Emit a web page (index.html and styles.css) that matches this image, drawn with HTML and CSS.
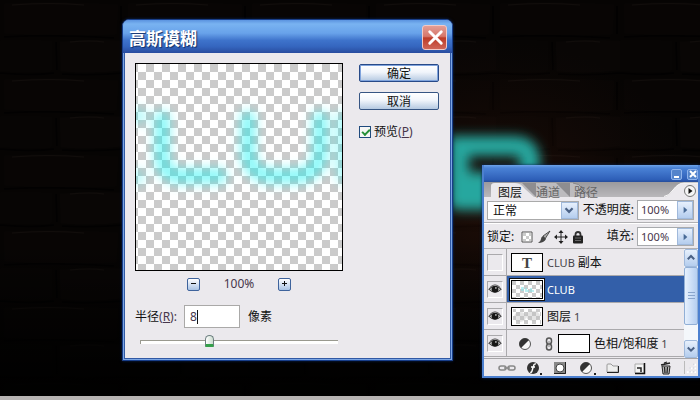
FILE: index.html
```html
<!DOCTYPE html>
<html lang="zh-CN">
<head>
<meta charset="utf-8">
<title>高斯模糊</title>
<link rel="stylesheet" href="styles.css">
</head>
<body>
<main class="desktop">
  <svg class="wall" preserveAspectRatio="xMidYMid slice" viewBox="0 0 700 400" aria-hidden="true">
    <defs>
      <pattern id="bricks" width="124" height="76" patternUnits="userSpaceOnUse">
        <rect width="124" height="76" fill="#060403"/>
        <path d="M4 4Q60 1 118 5L116 34Q60 37 5 33Z" fill="#080504"/>
        <path d="M0 41Q30 39 52 42L51 71Q20 73 0 70Z" fill="#070504"/>
        <path d="M60 42Q90 39 124 41V70Q90 74 61 71Z" fill="#090605"/>
        <path d="M4 37Q50 34 114 38M0 73Q30 76 54 73M62 74Q90 76 124 73M56 42L57 70M121 6V34" fill="none" stroke="#020101" stroke-width="2"/>
        <path d="M12 5Q50 2 84 5M70 42Q90 40 104 42" stroke="#110d0b" fill="none"/>
      </pattern>
      <linearGradient id="shade" x2="0" y2="1">
        <stop offset=".6" stop-opacity="0"/><stop offset=".95" stop-opacity=".9"/>
      </linearGradient>
      <radialGradient id="warm"><stop stop-color="#5a2410" stop-opacity=".3"/><stop offset="1" stop-color="#30140a" stop-opacity="0"/></radialGradient>
      <filter id="neon" x="-40%" y="-40%" width="180%" height="180%"><feGaussianBlur stdDeviation="6"/></filter>
    </defs>
    <rect width="700" height="400" fill="url(#bricks)"/>
    <ellipse cx="500" cy="200" rx="190" ry="160" fill="url(#warm)"/>
    <rect width="700" height="400" fill="url(#shade)"/>
    <g filter="url(#neon)" fill="none" stroke="#27a79f" stroke-width="20">
      <path d="M459 208V146H514Q530 146 530 161Q530 182 514 182H459"/>
      <path d="M455 198H500" stroke-width="24"/>
    </g>
  </svg>

  <section class="dialog" aria-labelledby="dialog-title">
    <header class="dialog-title">
      <h1 id="dialog-title">高斯模糊</h1>
      <button class="close" aria-label="关闭"><svg viewBox="0 0 26 26"><path d="M7 7L19 19M19 7L7 19" stroke="#fff" stroke-width="3" stroke-linecap="round"/></svg></button>
    </header>
    <form class="dialog-body">
      <div class="settings">
        <div class="preview">
          <svg viewBox="0 0 206 206" aria-hidden="true">
            <defs><filter id="soft" x="-20%" y="-40%" width="140%" height="180%"><feGaussianBlur stdDeviation="6"/></filter></defs>
            <g filter="url(#soft)" fill="none" stroke="#00f0f0" stroke-opacity=".48" stroke-width="15" stroke-linecap="round">
              <path d="M-4 52H4M-4 113H2" stroke-opacity=".3"/>
              <path d="M26 54V92Q26 112 44 112H84"/>
              <path d="M112 54V88Q112 112 138 112H158Q184 112 184 88V54"/>
              <path d="M208 54V112" stroke-opacity=".35"/>
            </g>
          </svg>
        </div>
        <div class="zoom">
          <button type="button" aria-label="缩小"><svg viewBox="0 0 13 13"><path d="M3 5.500H8" stroke="#111"/></svg></button>
          <output>100%</output>
          <button type="button" aria-label="放大"><svg viewBox="0 0 13 13"><path d="M3 5.500H8M5.500 3V8" stroke="#111"/></svg></button>
        </div>
        <div class="radius">
          <label for="radius">半径<span class="latin">(<u>R</u>):</span></label>
          <input id="radius" type="text" value="8">
          <span>像素</span>
        </div>
        <input class="slider" type="range" min="0" max="100" value="34" aria-label="半径">
      </div>
      <div class="actions">
        <button class="push primary" type="button">确定</button>
        <button class="push" type="button">取消</button>
        <label class="check"><input type="checkbox" checked><span>预览<span class="latin">(<u>P</u>)</span></span></label>
      </div>
    </form>
  </section>

  <section class="panel" aria-label="图层面板">
    <header class="panel-title">
      <button aria-label="最小化"><svg viewBox="0 0 11 11"><path d="M2 8H7" stroke="#fff" stroke-width="2"/></svg></button>
      <button aria-label="关闭面板"><svg viewBox="0 0 11 11"><path d="M2 2L8 8M8 2L2 8" stroke="#fff" stroke-width="2"/></svg></button>
    </header>
    <nav class="tabs">
      <svg class="tab-shapes" viewBox="0 0 110 15" aria-hidden="true">
        <path d="M0 15V4Q0 1 4 1H82Q88 1 92 7L99 15Z" fill="#bcbbbe"/>
        <path d="M82 1Q88 1 92 7L99 15" fill="none" stroke="#858487"/>
        <path d="M65 1L79 15V1Z" fill="#8e8d90"/>
        <path d="M31 1L45 15V1Z" fill="#8e8d90"/>
        <path d="M0 15V4Q0 1 4 1H24Q30 1 34 7L43 15Z" fill="#ebe9ed"/>
      </svg>
      <button class="tab active">图层</button>
      <button class="tab">通道</button>
      <button class="tab">路径</button>
      <button class="menu" aria-label="面板菜单"><svg viewBox="0 0 34 15"><path d="M0 15Q5 14 9 8Q14 1 20 1H34V15Z" fill="#ebe9ed"/><path d="M0 14.500Q5 14 9 8Q14 1 20 1H34" fill="none" stroke="#f8f8f8"/><circle cx="26" cy="9" r="5.500" fill="#f5f5f5" stroke="#777"/><path d="M24.500 6L28.500 9L24.500 12Z" fill="#111"/></svg></button>
    </nav>
    <div class="controls">
      <div class="select">
        <select aria-label="混合模式"><option>正常</option></select>
        <svg viewBox="0 0 17 17" aria-hidden="true"><path d="M4 6L8 10L12 6" fill="none" stroke="#4a6185" stroke-width="2.500"/></svg>
      </div>
      <div class="amount">
        <label for="opacity">不透明度:</label>
        <span class="spin"><input id="opacity" type="text" value="100%"><button aria-label="调整不透明度"><svg viewBox="0 0 15 17"><path d="M6 5L10 8.500L6 12Z" fill="#486a96"/></svg></button></span>
      </div>
    </div>
    <div class="controls lock">
      <span class="lock-label">锁定:</span>
      <button class="tool" aria-label="锁定透明像素"><svg viewBox="0 0 14 14"><path d="M2 2H12V12H2Z" fill="#fff" stroke="#555"/><path d="M3 3H6V6H3ZM6 6H9V9H6ZM9 3H11V6H9ZM3 9H6V11H3ZM9 9H11V11H9Z" fill="#ccc"/></svg></button>
      <button class="tool" aria-label="锁定图像像素"><svg viewBox="0 0 14 14"><path d="M13 1L6 6L8 9Z" fill="#aaa" stroke="#333" stroke-width=".8"/><path d="M6 6L9 9Q7 13 1 13Q4 11 4 9Q4 7 6 6Z" fill="#444"/></svg></button>
      <button class="tool" aria-label="锁定位置"><svg viewBox="0 0 14 14"><path d="M7 2V12M2 7H12" stroke="#222"/><path d="M7 0L9.500 3H4.500ZM7 14L9.500 11H4.500ZM0 7L3 4.500V9.500ZM14 7L11 4.500V9.500Z" fill="#222"/></svg></button>
      <button class="tool" aria-label="锁定全部"><svg viewBox="0 0 14 14"><path d="M4.500 7V4.500Q4.500 2 7 2Q9.500 2 9.500 4.500V7" fill="none" stroke="#333" stroke-width="1.800"/><rect x="2" y="5.500" width="10" height="8" rx="1" fill="#222"/><path d="M4 8H10M4 10.500H10" stroke="#666"/></svg></button>
      <div class="amount">
        <label for="fill">填充:</label>
        <span class="spin"><input id="fill" type="text" value="100%"><button aria-label="调整填充"><svg viewBox="0 0 15 17"><path d="M6 5L10 8.500L6 12Z" fill="#486a96"/></svg></button></span>
      </div>
    </div>
    <div class="layers">
      <ul>
        <li><button class="eye" aria-label="显示图层"></button><span class="thumb type-thumb">T</span><span class="name">CLUB <b>副本</b></span></li>
        <li class="selected"><button class="eye" aria-label="隐藏图层"><svg viewBox="0 0 16 12"><use href="#eye"/></svg></button><span class="thumb checker"><svg viewBox="0 0 30 17"><path d="M9 7H12M9 9H12M14 7V10H17M19 7V10H22" stroke="#8de4e8" stroke-opacity=".6" fill="none" stroke-width="2"/></svg></span><span class="name">CLUB</span></li>
        <li><button class="eye" aria-label="隐藏图层"><svg viewBox="0 0 16 12"><use href="#eye"/></svg></button><span class="thumb checker"><svg viewBox="0 0 30 17"><ellipse cx="8" cy="9" rx="6" ry="5" fill="#bbb" opacity=".4"/><ellipse cx="21" cy="8" rx="7" ry="5" fill="#bbb" opacity=".4"/></svg></span><span class="name"><b>图层</b> 1</span></li>
        <li><button class="eye" aria-label="隐藏图层"><svg viewBox="0 0 16 12"><use href="#eye"/></svg></button><svg class="adjust" viewBox="0 0 14 14"><use href="#half"/></svg><svg class="chain" viewBox="0 0 8 14"><rect x="1.500" y="1" width="5" height="6" rx="2.500" fill="none" stroke="#555" stroke-width="1.500"/><rect x="1.500" y="7" width="5" height="6" rx="2.500" fill="none" stroke="#555" stroke-width="1.500"/><path d="M4 4V10" stroke="#888"/></svg><span class="thumb"></span><span class="name"><b>色相/饱和度</b> 1</span></li>
      </ul>
      <div class="scroll">
        <button aria-label="向上滚动"><svg viewBox="0 0 13 17"><path d="M3 10L6.500 6.500L10 10" fill="none" stroke="#4a6185" stroke-width="2.200"/></svg></button>
        <div class="grip"><svg viewBox="0 0 7 9"><path d="M0 .5H7M0 3.500H7M0 6.500H7" stroke="#8aa5cc"/></svg></div>
        <button class="down" aria-label="向下滚动"><svg viewBox="0 0 13 17"><path d="M3 7L6.500 10.500L10 7" fill="none" stroke="#4a6185" stroke-width="2.200"/></svg></button>
      </div>
    </div>
    <footer class="toolbar">
      <button aria-label="链接图层"><svg viewBox="0 0 18 14"><rect x="1" y="5" width="7" height="4" rx="2" fill="none" stroke="#888" stroke-width="1.500"/><rect x="10" y="5" width="7" height="4" rx="2" fill="none" stroke="#888" stroke-width="1.500"/><path d="M6 7H12" stroke="#888" stroke-width="1.500"/></svg></button>
      <button aria-label="图层样式"><svg viewBox="0 0 18 14"><circle cx="8" cy="7" r="6" fill="#333"/><path d="M11 3Q9 2.500 8.500 5L7 10Q6.500 12 5 11M6 6H10" fill="none" stroke="#fff" stroke-width="1.400"/><path d="M15 12H17V14H15Z" fill="#222"/></svg></button>
      <button aria-label="添加蒙版"><svg viewBox="0 0 18 14"><path d="M3 1H15V13H3Z" fill="#888"/><path d="M3 12.500H14.500V1" fill="none" stroke="#222"/><circle cx="9" cy="7" r="4" fill="#fff" stroke="#444"/></svg></button>
      <button aria-label="新建调整图层"><svg viewBox="0 0 18 14"><g transform="translate(1 0)"><use href="#half"/></g><path d="M16 12H18V14H16Z" fill="#222"/></svg></button>
      <button aria-label="新建组"><svg viewBox="0 0 18 14"><path d="M3 4Q3 3 4 3H7L9 5H14V11H3Z" fill="#eee" stroke="#999"/><path d="M3 11.500H14.500V5" fill="none" stroke="#222"/></svg></button>
      <button aria-label="新建图层"><svg viewBox="0 0 18 14"><path d="M4 3H13V12H4Z" fill="#f4f4f4" stroke="#aaa"/><path d="M4 12.500H13.500V2" fill="none" stroke="#111" stroke-width="1.500"/><path d="M6 7H10V11" fill="none" stroke="#222" stroke-width="1.500"/></svg></button>
      <button aria-label="删除图层"><svg viewBox="0 0 18 14"><path d="M5 5H13L12 13H6Z" fill="#bbb" stroke="#222"/><path d="M4 4L13 2M7 2L10 1M7.500 6L8 12M10.500 6L10 12" stroke="#222" stroke-width="1.300"/></svg></button>
      <svg class="resize" viewBox="0 0 14 14" aria-hidden="true"><path d="M10 3h2v2h-2zM6 7h2v2H6zM10 7h2v2h-2zM2 11h2v2H2zM6 11h2v2H6zM10 11h2v2h-2z" fill="#fff"/><path d="M9 3h1v1h-1zM5 7h1v1H5zM9 7h1v1H9zM5 11h1v1H5zM9 11h1v1H9z" fill="#bbc3d0"/></svg>
    </footer>
  </section>
  <svg class="symbols" aria-hidden="true"><defs>
    <g id="eye"><path d="M1 6Q8 -1 15 6Q8 13 1 6Z" fill="#ccc" stroke="#333" stroke-width="1.200"/><path d="M2 4Q8 -2 14 4" fill="none" stroke="#444"/><circle cx="8" cy="6" r="3.800" fill="#161616"/><circle cx="9" cy="4.500" r="1" fill="#bbb"/></g>
    <g id="half"><circle cx="7" cy="7" r="5.500" fill="#f8f8f8" stroke="#555"/><path d="M3 11A5.500 5.500 0 0 1 11 3Z" fill="#333"/></g>
  </defs></svg>
</main>
</body>
</html>
```
FILE: styles.css
```css
* { box-sizing: border-box; }
body {
  margin: 0;
  font: 12px/16px "Noto Sans", "Noto Sans CJK SC", sans-serif;
  color: #111;
}
button, input, select { font: inherit; color: inherit; margin: 0; padding: 0; }
button { border: 0; background: none; display: grid; place-items: center; }
svg { display: block; }
.latin, output, .spin input, .radius input { color: #47364b; }
.desktop {
  position: relative;
  min-height: 100vh;
  overflow: hidden;
  background: #050302;
  border-bottom: 4px solid #b7b4b3;
}
.wall { position: absolute; inset: 0; width: 100%; height: 100vh; }
.symbols { position: absolute; width: 0; height: 0; }

/* Gaussian blur dialog */
.dialog {
  position: absolute;
  left: 122px;
  top: 19px;
  width: 331px;
  background: #ebe9ed;
  border: 1px solid #183e8a;
  border-radius: 7px 7px 0 0;
  box-shadow: inset 0 0 0 1px #7ba6e4, inset 0 0 0 2px #3159a4, 0 0 3px #0b2558;
}
.dialog-title {
  display: flex;
  align-items: center;
  justify-content: space-between;
  height: 33px;
  padding: 2px 5px 0 6px;
  border-radius: 6px 6px 0 0;
  background: linear-gradient(#5b93df, #79b3f1 12%, #68a2ea 40%, #3e73cb 62%, #3566bf 80%, #284c9f);
}
.dialog-title h1 {
  margin: 0;
  padding-top: 2px;
  font-size: 17px;
  line-height: 24px;
  font-weight: 700;
  color: #fff;
  text-shadow: 1px 1px 1px #123069;
}
.close {
  width: 25px;
  height: 25px;
  border: 1px solid #f2c9c5;
  border-radius: 3px;
  background: linear-gradient(#e39d94, #d6776b 45%, #bd3b28 52%, #cf6658);
}
.close svg { width: 25px; }
.dialog-body { display: flex; gap: 16px; padding: 10px 12px; }
.settings { width: 208px; }
.preview, .checker {
  border: 1px solid #000;
  background: repeating-conic-gradient(#fff 0 25%, #cbcbcb 0 50%) 2px 0 / 16px 16px;
}
.preview { background-position: 2px 8px; }
.zoom {
  display: flex;
  justify-content: space-between;
  align-items: center;
  padding: 5px 52px 0;
}
.zoom button {
  width: 13px;
  height: 13px;
  border: 1px solid #3e639c;
  border-radius: 2px;
  background: linear-gradient(#fff, #a9c3e5);
}
.zoom svg { width: 13px; }
.radius { display: flex; align-items: center; gap: 4px; padding-top: 13px; }
.radius label { width: 45px; padding-top: 1px; white-space: nowrap; }
.radius input {
  width: 56px;
  height: 23px;
  padding: 0 5px;
  border: 1px solid #aaa9a8;
  background: linear-gradient(#111, #111) 12px 4px / 1px 14px no-repeat #fff;
}
.radius > span { padding: 1px 0 0 4px; }
.slider {
  display: block;
  appearance: none;
  width: 198px;
  height: 16px;
  margin: 6px 5px 0;
  background: none;
}
.slider::-webkit-slider-runnable-track {
  height: 4px;
  border-top: 1px solid #99998f;
  border-left: 1px solid #99998f;
  background: #fff;
}
.slider::-webkit-slider-thumb {
  appearance: none;
  width: 9px;
  height: 12px;
  margin-top: -6px;
  border: 1px solid #6d7f80;
  border-bottom: 3px solid #35a04b;
  border-radius: 5px 5px 1px 1px;
  background: linear-gradient(90deg, #fff, #ccdccf);
}
.actions { display: flex; flex-direction: column; gap: 10px; padding-top: 1px; }
.push {
  width: 80px;
  height: 18px;
  padding-top: 1px;
  border: 1px solid #365583;
  border-radius: 2px;
  background: linear-gradient(#fff, #f1f5fb 45%, #b5c9e1);
}
.primary { border-color: #284a88; box-shadow: inset 0 0 0 1px #7fa3dc; }
.check { display: flex; gap: 3px; align-items: center; padding-top: 4px; }
.check input {
  appearance: none;
  width: 12px;
  height: 12px;
  border: 1px solid #1f4a7d;
  background: #f7f7f5;
}
.check input::before {
  content: "";
  display: block;
  width: 6px;
  height: 3px;
  margin: 2px;
  border: solid #279038;
  border-width: 0 0 2px 2px;
  transform: rotate(-45deg);
}

/* Layers panel */
.panel {
  position: absolute;
  left: 482px;
  right: 0;
  top: 165px;
  border: 2px solid #4c80d0;
  border-top: 0;
  background: #ebe9ed;
  box-shadow: 0 0 3px #0b2558;
}
.panel-title {
  display: flex;
  justify-content: flex-end;
  align-items: center;
  gap: 5px;
  height: 17px;
  padding-top: 1px;
  background: linear-gradient(#6da3e8, #4a82d6 18%, #2e5fb8 85%, #274d9a);
}
.panel-title button { width: 11px; height: 11px; border: 1px solid #8eb3ec; border-radius: 2px; background: #5484cb; }
.panel-title svg { width: 11px; }
.tabs {
  position: relative;
  display: flex;
  gap: 14px;
  height: 15px;
  padding-left: 14px;
  background: linear-gradient(#9b9a9d, #b9b8bb);
}
.tab-shapes { position: absolute; left: 7px; top: 0; width: 110px; }
.tab { position: relative; padding-top: 3px; line-height: 15px; color: #666; }
.tab.active { color: #111; }
.menu { margin-left: auto; }
.menu svg { width: 34px; }
.controls {
  display: flex;
  align-items: center;
  justify-content: space-between;
  min-height: 26px;
  padding: 1px 4px 0 3px;
  border-bottom: 1px solid #b1b0b3;
}
.lock { border-top: 1px solid #fff; }
.select { display: grid; width: 92px; border: 1px solid #aaa; background: #fff; }
.select > * { grid-area: 1 / 1; }
.select select { appearance: none; width: 100%; height: 17px; padding: 1px 5px 0; border: 0; background: none; }
.select svg { justify-self: end; width: 17px; height: 17px; pointer-events: none; }
.select svg, .spin button, .scroll button {
  border: 1px solid #a0b9db;
  background: linear-gradient(#e7f0fc, #b4cdee);
}
.amount { display: flex; align-items: center; gap: 3px; white-space: nowrap; }
.lock .amount { margin-left: auto; }
.spin { display: flex; width: 57px; border: 1px solid #a8aaad; background: #fff; }
.spin input { flex: 1; min-width: 0; height: 17px; padding-left: 3px; border: 0; background: none; font-size: 11px; }
.spin button { width: 16px; }
.spin svg { width: 14px; }
.lock-label { padding-right: 4px; }
.tool { width: 17px; }
.tool svg { width: 14px; }
.layers { display: flex; border-bottom: 1px solid #a6a5a8; }
.layers ul { flex: 1; margin: 0; padding: 0 0 1px; list-style: none; }
.layers li { display: flex; align-items: center; height: 27px; padding-top: 1px; border-bottom: 1px solid #aaa9ac; }
.eye {
  position: relative;
  width: 16px;
  height: 17px;
  margin: 0 8px 0 3px;
  border: 1px solid #aaa9ac;
  border-color: #aaa9ac #fff #fff #aaa9ac;
}
.layers li.selected { background: linear-gradient(90deg, #ebe9ed 22px, #aaa9ac 22px 23px, #335fa9 23px); }
.layers li:not(.selected) { background: linear-gradient(90deg, transparent 22px, #aaa9ac 22px 23px, transparent 23px); }
.eye svg { width: 14px; }
.thumb { width: 32px; height: 19px; border: 1px solid #000; background-color: #fff; box-shadow: inset 0 0 0 1px #fff; }
.checker { background: repeating-conic-gradient(#fff 0 25%, #cbcbcb 0 50%) 0 0 / 8px 8px; }
.selected .thumb { outline: 1px solid #fff; box-shadow: 0 0 0 2px #111; }
.type-thumb { display: grid; place-items: center; font: 700 15px/16px "Liberation Serif", serif; color: #444; }
.name { padding-left: 4px; color: #46444a; font-size: 11px; white-space: nowrap; }
.name b { font-size: 12px; font-weight: 400; color: #111; }
.selected .name { color: #fff; }
.adjust { width: 14px; margin: 0 13px 0 7px; }
.chain { width: 8px; margin-right: 5px; }
.scroll { display: flex; flex-direction: column; width: 14px; background: #f4f7fb; }
.scroll svg { width: 12px; }
.scroll button { height: 18px; border-radius: 2px; }
.grip {
  display: grid;
  place-items: center;
  height: 58px;
  border: 1px solid #91afd6;
  border-radius: 2px;
  background: linear-gradient(90deg, #e6f0fd, #b6cff1);
}
.grip svg { width: 7px; }
.scroll .down { margin-top: auto; }
.toolbar { display: flex; align-items: center; justify-content: space-between; height: 17px; padding-left: 14px; }
.toolbar button svg { width: 18px; }
.resize { width: 14px; border-left: 1px solid #bbb; }
```
